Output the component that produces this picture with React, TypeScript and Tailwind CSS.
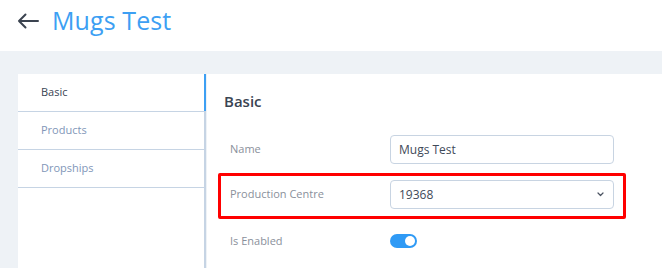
import React from "react";

export default function App() {
  return (
    <div className="w-[662px] h-[268px] overflow-hidden bg-white flex flex-col" style={{ fontFamily: '"Open Sans", "Noto Sans", sans-serif' }}>
      <div className="h-[51px] flex items-center pl-[17px] shrink-0">
        <svg width="22" height="16" viewBox="0 0 22 16" className="mr-[13px] mt-[-10px]">
          <path d="M21 8H2M8.5 1.5L2 8l6.5 6.5" fill="none" stroke="#3b4350" strokeWidth="2" strokeLinecap="round" strokeLinejoin="round" />
        </svg>
        <span className="text-[25px] leading-none text-[#3d9ff3] mt-[-10px] tracking-[0.1px]">Mugs Test</span>
      </div>
      <div className="flex-1 bg-[#eef2f6] pt-[23px] pl-[18px] flex min-h-0">
        <div className="w-[188px] bg-white border-r-2 border-[#c6d4e4] shrink-0 flex flex-col">
          <div className="h-[38px] border-b border-[#c6d4e4] flex items-center pl-[23px] text-[11px] text-[#3a4452] relative">
            Basic
            <span className="absolute right-[-2px] top-0 bottom-0 w-[2px] bg-[#3d9ff3]" />
          </div>
          <div className="h-[38px] border-b border-[#c6d4e4] flex items-center pl-[23px] text-[11px] text-[#8196b8]">Products</div>
          <div className="h-[38px] border-b border-[#c6d4e4] flex items-center pl-[23px] text-[11px] text-[#8196b8]">Dropships</div>
        </div>
        <div className="flex-1 bg-white ml-px pl-[17px] pt-[16px]">
          <div className="h-[22px] leading-[22px] text-[15px] font-semibold text-[#3a4452]">Basic</div>
          <div className="ml-[6px] mt-[23px] w-[384px] flex flex-col">
            <div className="flex items-center h-[29px]">
              <div className="w-[160px] text-[11px] text-[#8a909b]">Name</div>
              <div className="flex-1 h-[29px] border border-[#c8d4e2] rounded-[4px] flex items-center px-[8px] text-[12px] text-[#3f4a59]">Mugs Test</div>
            </div>
            <div className="flex items-center h-[29px] mt-[16px] relative">
              <span className="absolute left-[-12px] right-[-12px] top-[-7px] bottom-[-10px] border-[3px] border-[#ff0000] rounded-[2px] pointer-events-none" />
              <div className="w-[160px] text-[11px] text-[#8a909b]">Production Centre</div>
              <div className="flex-1 h-[29px] border border-[#c8d4e2] rounded-[4px] flex items-center justify-between pl-[8px] pr-[9px] text-[12px] text-[#3f4a59]">
                <span>19368</span>
                <svg width="7" height="5" viewBox="0 0 7 5">
                  <path d="M1 1l2.5 2.5L6 1" fill="none" stroke="#4a5260" strokeWidth="1.2" strokeLinecap="round" strokeLinejoin="round" />
                </svg>
              </div>
            </div>
            <div className="flex items-center h-[14px] mt-[25px]">
              <div className="w-[160px] text-[11px] text-[#8a909b]">Is Enabled</div>
              <div className="w-[27px] h-[14px] rounded-full bg-[#2f9af5] relative">
                <span className="absolute right-[2px] top-[2px] w-[10px] h-[10px] rounded-full bg-white" />
              </div>
            </div>
          </div>
        </div>
      </div>
    </div>
  );
}
